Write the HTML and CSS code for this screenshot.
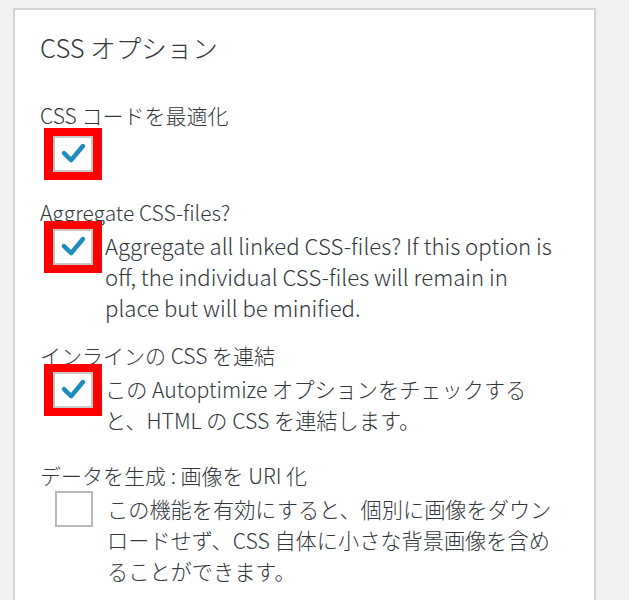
FILE: index.html
```html
<!DOCTYPE html>
<html lang="ja">
<head>
<meta charset="UTF-8">
<title>CSS オプション</title>
<link rel="stylesheet" href="styles.css">
</head>
<body>
<div class="card">
    <h2 class="title">CSS オプション</h2>

    <div class="option first">
        <div class="label">CSS コードを最適化</div>
        <div class="row">
            <span class="mark"><span class="box checked"></span></span>
        </div>
    </div>

    <div class="option">
        <div class="label">Aggregate CSS-files?</div>
        <div class="row">
            <span class="mark"><span class="box checked"></span></span>
            <p class="desc en">Aggregate all linked CSS-files? If this option is off, the individual CSS-files will remain in place but will be minified.</p>
        </div>
    </div>

    <div class="option">
        <div class="label">インラインの CSS を連結</div>
        <div class="row">
            <span class="mark"><span class="box checked"></span></span>
            <p class="desc">この Autoptimize オプションをチェックすると、HTML の CSS を連結します。</p>
        </div>
    </div>

    <div class="option last">
        <div class="label">データを生成 : 画像を URI 化</div>
        <div class="row">
            <span class="plain"><span class="box"></span></span>
            <p class="desc">この機能を有効にすると、個別に画像をダウンロードせず、CSS 自体に小さな背景画像を含めることができます。</p>
        </div>
    </div>
</div>
</body>
</html>
```
FILE: styles.css
```css
body {
  margin: 0;
  padding: 8px 0 0 13px;
  background: #f1f1f1;
  font-family: "Noto Sans CJK JP", "Noto Sans", sans-serif;
  font-weight: 300;
  color: #32373c;
  overflow: hidden;
}

.card {
  width: 583px;
  height: 640px;
  background: white;
  border: 2px solid #d3d3d3;
  box-sizing: border-box;
  padding: 20px 0 0 25px;
}

.title {
  margin: 0;
  font-size: 25.5px;
  font-weight: 300;
  line-height: 34px;
}

.option {
  margin-top: 18px;
}
.option.first {
  margin-top: 37px;
}
.option.last {
  margin-top: 26px;
}

.label {
  font-size: 21px;
  line-height: 28px;
}

.row {
  display: flex;
  align-items: flex-start;
  margin-top: -5px;
}
.first .row {
  margin-top: -1px;
}

.mark {
  display: inline-block;
  margin-left: 4px;
  padding: 8px 9px;
  background: red;
}
.plain {
  display: inline-block;
  padding: 7px 0 0 15px;
}

.box {
  display: block;
  width: 40px;
  height: 36px;
  box-sizing: border-box;
  border: 2px solid #b4b9be;
  background: white;
}
.plain .box {
  width: 38px;
}
.checked {
  border-color: #c8c8c8;
  background: white url("data:image/svg+xml;utf8,<svg xmlns='http://www.w3.org/2000/svg' viewBox='0 0 40 36'><path d='M10 17 L18 25 L31 9' fill='none' stroke='%231e8cbe' stroke-width='5' stroke-linecap='round' stroke-linejoin='round'/></svg>") no-repeat center;
}

.desc {
  margin: 9px 0 0 3px;
  width: 450px;
  font-size: 21.2px;
  line-height: 31px;
}
.desc.en {
  font-size: 22.2px;
}
.plain + .desc {
  margin-left: 14px;
  width: 446px;
}
```
